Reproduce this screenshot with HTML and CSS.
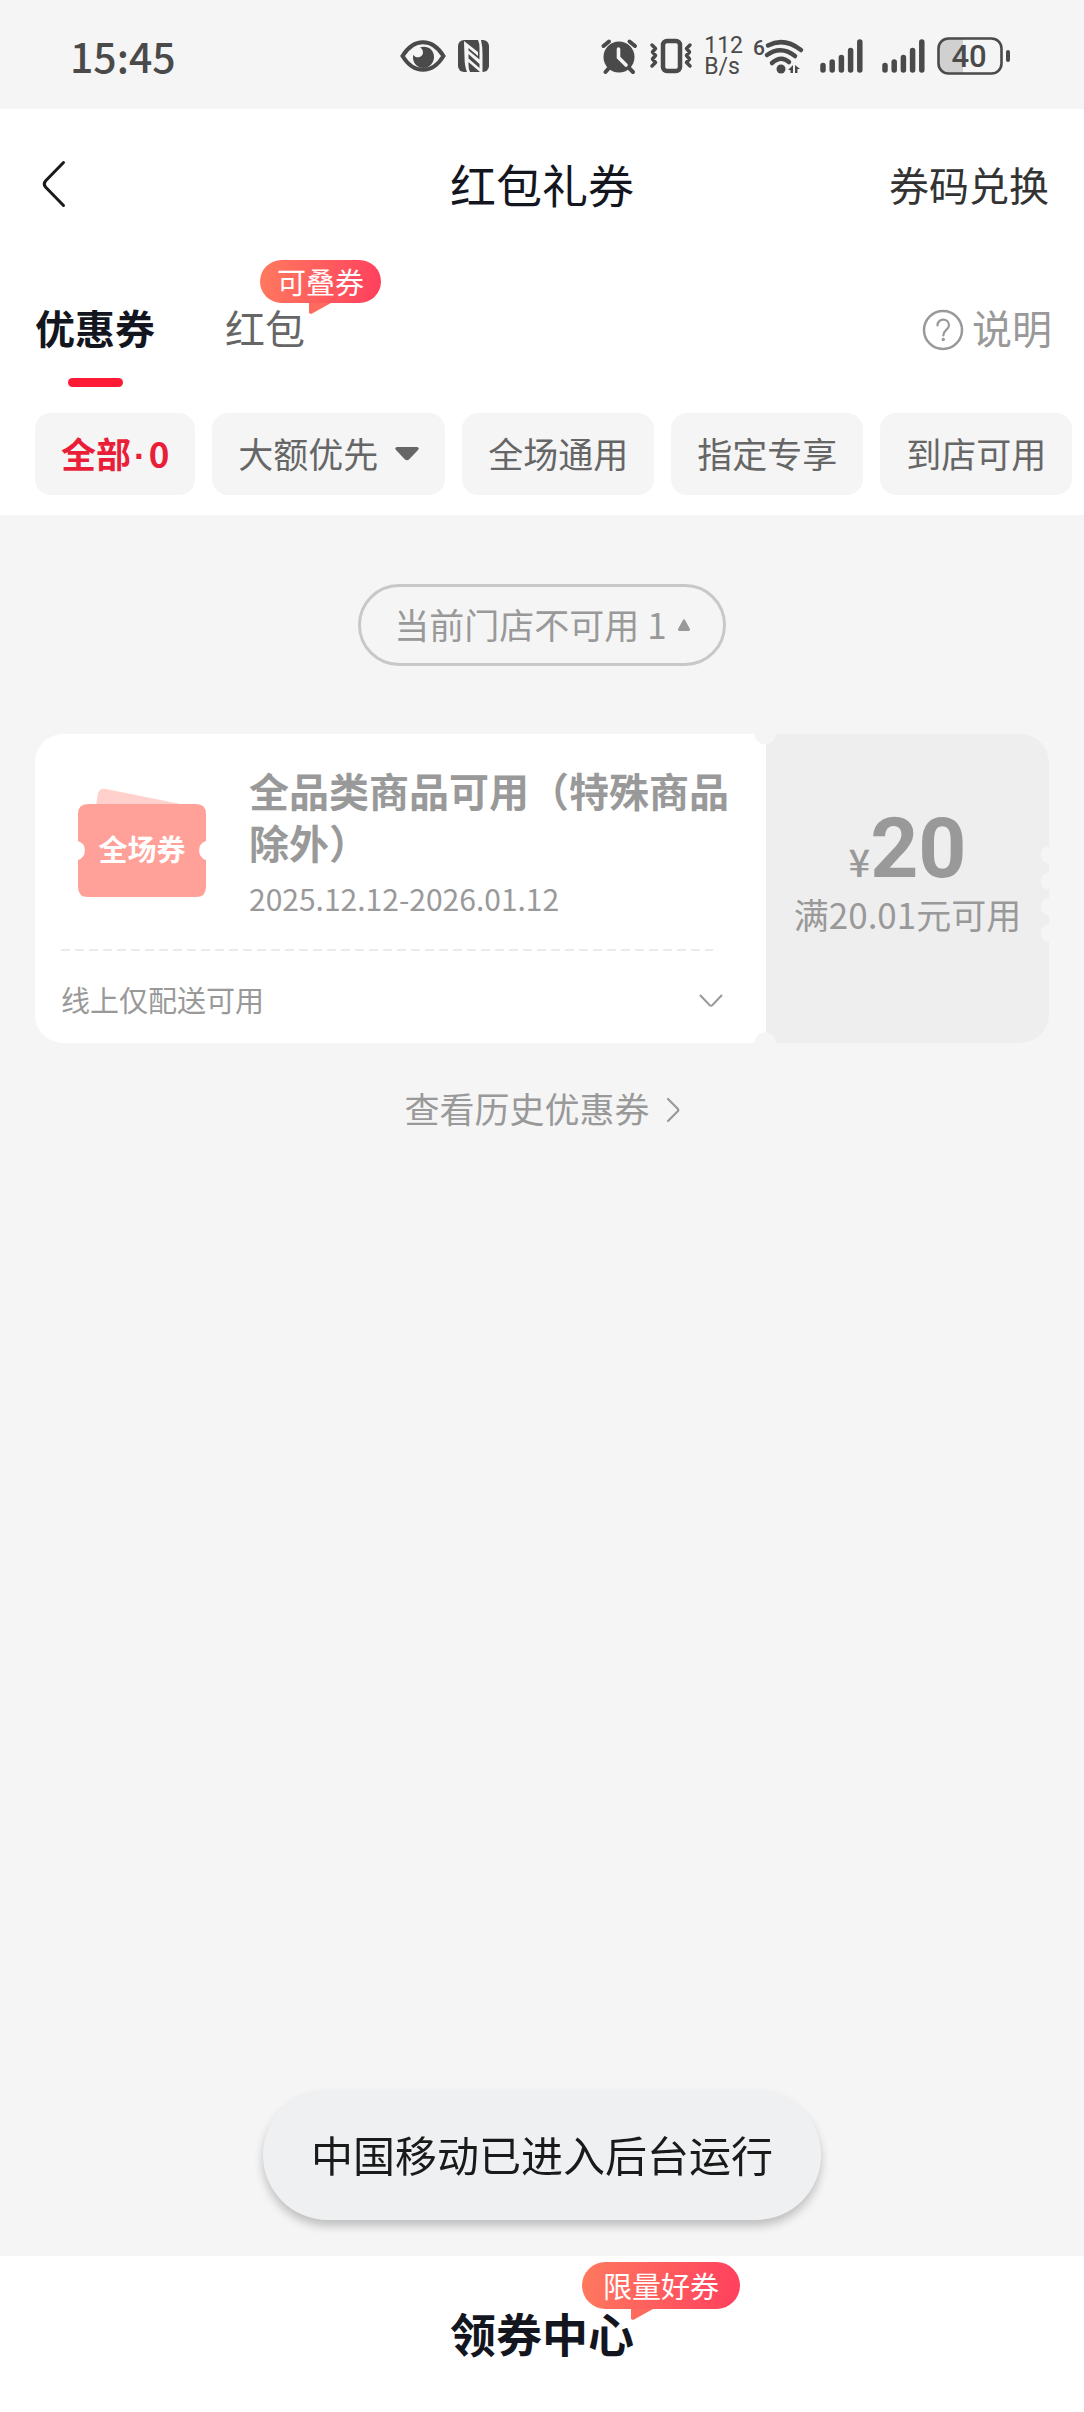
FILE: index.html
```html
<!DOCTYPE html>
<html lang="zh-CN">
<head>
<meta charset="utf-8">
<meta name="viewport" content="width=device-width, initial-scale=1">
<title>红包礼券</title>
<link rel="stylesheet" href="styles.css">
</head>
<body>
<div class="status">
  <span class="status-time">15:45</span>
  <div class="status-left">
    <svg width="46" height="32" viewBox="0 0 46 32" aria-hidden="true">
      <path d="M2.500 16C8 7 15 2.200 23 2.200S38 7 43.500 16C38 25 31 29.800 23 29.800S8 25 2.500 16Z" fill="none" stroke="currentColor" stroke-width="4"/>
      <path d="M20 7.500c7-2.500 14 2 14 9.500 0 6-4.800 11-10.500 11S13 23.500 13 17.500c0-1 .1-2 .4-2.800 2.600 4.600 9.600 2.600 9.600-2.200 0-2.300-1.200-4.100-3-5Z" fill="currentColor"/>
    </svg>
    <svg width="31" height="32" viewBox="0 0 31 32" aria-hidden="true">
      <rect width="31" height="32" rx="6" fill="currentColor"/>
      <path d="M6 1 20 12V16L10.500 8V25Q10.500 29 12 32H9Q6.500 26 6.500 17ZM20 0H23Q24.500 6 24.500 14V32H22L10.500 22V18.500L21.500 28V24L10.500 14V10.500L21.500 19.500V8Q21.500 3 20 0Z" fill="#f5f5f5"/>
    </svg>
  </div>
  <div class="status-right">
    <svg width="37" height="36" viewBox="0 0 37 36" aria-hidden="true">
      <circle cx="18" cy="19" r="15.500" fill="currentColor"/>
      <path d="M2.500 8 8 3.500M28.500 3.500 34 8M8 30 4.500 34M28 30 32 34" stroke="currentColor" stroke-width="4" stroke-linecap="round"/>
      <path d="M17.500 11V19.500L25 27" fill="none" stroke="#f5f5f5" stroke-width="3.600" stroke-linecap="round"/>
    </svg>
    <svg width="42" height="36" viewBox="0 0 42 36" aria-hidden="true">
      <rect x="13" y="3" width="17" height="30" rx="4" fill="none" stroke="currentColor" stroke-width="4.500"/>
      <path d="M2 7 5.500 10.500 2.500 14 5.500 17.500 2.500 21 5.500 24.500 2 28M40 7 36.500 10.500 39.500 14 36.500 17.500 39.500 21 36.500 24.500 40 28" fill="none" stroke="currentColor" stroke-width="3.500" stroke-linecap="round" stroke-linejoin="round"/>
    </svg>
    <span class="status-speed">112<br>B/s</span>
    <svg width="53" height="38" viewBox="0 0 53 38" aria-hidden="true">
      <text x="-2" y="18" class="wifi-gen">6</text>
      <path d="M13 8.500Q29 0 46 13M12 18Q26 8 40 19M17 26Q26 18 34 25" fill="none" stroke="currentColor" stroke-width="4.500" stroke-linecap="round"/>
      <circle cx="26" cy="32" r="4.500" fill="currentColor"/>
      <path d="M38 28V36H35.500V33H33ZM40 28 45 32H42.500V36H40Z" fill="currentColor"/>
    </svg>
    <svg width="50" height="34" viewBox="0 0 50 34" aria-hidden="true">
      <path d="M3 26.500V31M12.200 23V31M21.400 18.500V31M30.600 11.500V31M39.800 3V31" stroke="currentColor" stroke-width="5.500" stroke-linecap="round"/>
    </svg>
    <svg width="43" height="34" viewBox="0 0 43 34" aria-hidden="true">
      <path d="M3 26.500V31M12.200 23V31M21.400 18.500V31M30.600 11.500V31M39.800 3V31" stroke="currentColor" stroke-width="5.500" stroke-linecap="round"/>
    </svg>
    <svg width="73" height="38" viewBox="0 0 73 38" aria-label="电量 40%">
      <path d="M26 2H12Q2 2 2 12V26Q2 36 12 36H26Z" fill="#d0d0d0"/>
      <rect x="1.500" y="1.500" width="63" height="35" rx="10" fill="none" stroke="currentColor" stroke-width="2.600"/>
      <rect x="69" y="13" width="4" height="12" rx="2" fill="currentColor"/>
      <text x="32" y="30" text-anchor="middle" class="battery-text">40</text>
    </svg>
  </div>
</div>

<header class="header">
  <nav class="nav">
    <button class="nav-back" type="button" aria-label="返回">
      <svg width="24" height="48" viewBox="0 0 24 48"><path d="M21.500 2.500 3.500 21Q1 24 3.500 27L21.500 45.500" fill="none" stroke="#1a1a1a" stroke-width="3" stroke-linecap="round"/></svg>
    </button>
    <h1 class="nav-title">红包礼券</h1>
    <a class="nav-link" href="#redeem">券码兑换</a>
  </nav>

  <div class="tabs">
    <button class="tab tab-active" type="button">优惠券</button>
    <button class="tab" type="button">红包<span class="bubble bubble-tab">可叠券</span></button>
    <a class="help" href="#help">
      <svg class="help-icon" width="42" height="42" viewBox="0 0 42 42" aria-hidden="true">
        <circle cx="21" cy="21" r="19" fill="none" stroke="currentColor" stroke-width="2.500"/>
        <path d="M15.500 16.500C15.500 8.500 27 9 27 16.200 27 20.500 21.300 21 21.300 26.500" fill="none" stroke="currentColor" stroke-width="2.200" stroke-linecap="round"/>
        <circle cx="21.300" cy="30.500" r="1.700" fill="currentColor"/>
      </svg>说明</a>
  </div>

  <div class="chips">
    <button class="chip chip-active" type="button"><span>全部<span class="chip-dot">·</span>0</span></button>
    <label class="chip">
      <select class="chip-select" aria-label="排序方式"><option>大额优先</option></select>
      <svg class="caret" width="24" height="14" viewBox="0 0 24 14" aria-hidden="true"><path d="M2 0H22Q25 1 23 3L14 12.500Q12 14 10 12.500L1 3Q-1 1 2 0Z" fill="currentColor"/></svg>
    </label>
    <button class="chip" type="button">全场通用</button>
    <button class="chip" type="button">指定专享</button>
    <button class="chip" type="button">到店可用</button>
  </div>
</header>

<main class="main">
  <button class="fold" type="button">当前门店不可用 1
    <svg class="caret" width="12" height="12" viewBox="0 0 12 12" aria-hidden="true"><path d="M5 1Q6-.5 7 1L12 10Q12 12 11 12H1Q0 12 0 10Z" fill="currentColor"/></svg>
  </button>

  <article class="coupon">
    <div class="coupon-info">
      <div class="coupon-top">
        <svg class="coupon-icon" width="130" height="110" viewBox="0 0 130 110" role="img" aria-label="全场券">
          <path d="M18 18 20 5Q22 0 28 1L112 18Z" fill="#ffd0cc"/>
          <path d="M10 16H118Q128 16 128 26V53A10 10 0 0 0 128 72V99Q128 109 118 109H10Q0 109 0 99V72A10 10 0 0 0 0 53V26Q0 16 10 16Z" fill="#ffa198"/>
          <text x="64" y="73" text-anchor="middle" class="ticket-text">全场券</text>
        </svg>
        <div class="coupon-text">
          <h2 class="coupon-title">全品类商品可用（特殊商品除外）</h2>
          <p class="coupon-date">2025.12.12-2026.01.12</p>
        </div>
      </div>
      <svg class="coupon-line" height="2" aria-hidden="true"><line x1="0" y1="1" x2="100%" y2="1" stroke="#ebebeb" stroke-width="2" stroke-dasharray="9 5"/></svg>
      <button class="coupon-rule" type="button">线上仅配送可用
        <svg class="caret" width="24" height="14" viewBox="0 0 24 14" aria-hidden="true"><path d="M1.500 1.500 10.500 11Q12 12.500 13.500 11L22.500 1.500" fill="none" stroke="currentColor" stroke-width="2" stroke-linecap="round"/></svg>
      </button>
    </div>
    <div class="coupon-value">
      <p class="coupon-amount"><span class="coupon-unit">¥</span>20</p>
      <p class="coupon-cond">满20.01元可用</p>
    </div>
  </article>

  <a class="history" href="#history">查看历史优惠券
    <svg class="caret" width="14" height="26" viewBox="0 0 14 26" aria-hidden="true"><path d="M2 2 11.500 11.500Q13 13 11.500 14.500L2 24" fill="none" stroke="currentColor" stroke-width="2.200" stroke-linecap="round"/></svg>
  </a>
</main>

<div class="toast" role="status">中国移动已进入后台运行</div>

<footer class="footer">
  <a class="footer-link" href="#center">领券中心<span class="bubble bubble-footer">限量好券</span></a>
</footer>
</body>
</html>
```

FILE: styles.css
```css
* {
  box-sizing: border-box;
}

body {
  margin: 0;
  min-height: 100vh;
  display: flex;
  flex-direction: column;
  background: #f5f5f5;
  color: #666;
  font-family: "Noto Sans CJK SC", sans-serif;
}

button,
select {
  margin: 0;
  padding: 0;
  border: 0;
  background: none;
  color: inherit;
  font: inherit;
}

a {
  color: inherit;
  text-decoration: none;
}

h1,
h2,
p {
  margin: 0;
}

svg {
  display: block;
  flex: none;
  overflow: visible;
}

/* System status bar */
.status {
  display: flex;
  align-items: center;
  height: 109px;
  padding: 2px 74px 0 70px;
  color: #4a4a4a;
}

.status-time {
  padding-bottom: 2px;
  font-size: 41px;
  font-weight: 500;
  line-height: 60px;
}

.status-left {
  display: flex;
  gap: 12px;
  margin-left: 224px;
}

.status-right {
  display: flex;
  align-items: center;
  gap: 12px;
  margin-left: auto;
}

.status-speed {
  font-family: Roboto, sans-serif;
  font-size: 23px;
  line-height: 21px;
}

.wifi-gen {
  font-family: Roboto, sans-serif;
  font-size: 21px;
  font-weight: 500;
  fill: currentColor;
}

.battery-text {
  font-family: Roboto, sans-serif;
  font-size: 31px;
  font-weight: 500;
  fill: currentColor;
}

/* Page header */
.header {
  background: #fff;
  padding-bottom: 20px;
}

.nav {
  display: grid;
  grid-template-columns: 1fr auto 1fr;
  align-items: center;
  height: 150px;
  padding: 0 35px;
}

.nav-back {
  justify-self: start;
  padding-left: 7px;
}

.nav-title {
  padding-bottom: 2px;
  color: #14161f;
  font-size: 46px;
  font-weight: 400;
  line-height: 60px;
}

.nav-link {
  justify-self: end;
  color: #333;
  font-size: 40px;
  line-height: 60px;
}

.tabs {
  display: flex;
  align-items: flex-start;
  gap: 70px;
  padding: 38px 32px 0 35px;
}

.tab {
  position: relative;
  font-size: 40px;
  line-height: 60px;
}

.tab-active {
  color: #14161f;
  font-weight: 700;
}

.tab-active::after {
  content: "";
  display: block;
  width: 55px;
  height: 9px;
  margin: 21px auto 0;
  border-radius: 5px;
  background: #fe1a35;
}

.help {
  display: flex;
  align-items: center;
  gap: 8px;
  margin-left: auto;
  color: #999;
  font-size: 40px;
  line-height: 60px;
}

.help-icon {
  margin-top: 6px;
}

.bubble {
  position: absolute;
  padding: 0 17px;
  border-radius: 24px;
  background: linear-gradient(100deg, #ff7a5e, #ff3f5e);
  color: #fff;
  font-size: 29px;
  font-weight: 400;
  white-space: nowrap;
}

.bubble::after {
  content: "";
  position: absolute;
  top: 100%;
  left: 49px;
  width: 22px;
  height: 11px;
  background: #ff6a5e;
  clip-path: polygon(0 0, 100% 0, 10% 100%, 0 90%);
}

.bubble-tab {
  left: 35px;
  bottom: 54px;
  line-height: 43px;
}

.chips {
  display: flex;
  gap: 17px;
  padding: 26px 12px 0 35px;
  overflow: hidden;
}

.chip {
  display: flex;
  flex: none;
  align-items: center;
  gap: 16px;
  height: 82px;
  padding: 0 26px 4px;
  border-radius: 16px;
  background: #f5f5f5;
  font-size: 35px;
}

.chip-active {
  color: #e91f3a;
  font-weight: 700;
}

.chip-dot {
  margin: 0 3px;
  font-family: "Liberation Sans", sans-serif;
}

.chip-select {
  appearance: none;
}

.caret {
  margin-top: 3px;
}

/* Coupon list */
.main {
  flex: 1;
  display: flex;
  flex-direction: column;
  align-items: center;
  padding: 69px 35px 0;
  color: #999;
}

.fold {
  display: flex;
  align-items: center;
  gap: 11px;
  height: 82px;
  padding: 0 33px 4px;
  border: 3px solid #c8c8c8;
  border-radius: 41px;
  font-size: 35px;
}

.coupon {
  position: relative;
  display: flex;
  align-self: stretch;
  margin-top: 68px;
  border-radius: 28px;
  overflow: hidden;
  background: #fff;
}

/* Round notches where the two halves meet */
.coupon-value::before {
  content: "";
  position: absolute;
  top: 0;
  bottom: 0;
  left: -12px;
  width: 22px;
  background:
    radial-gradient(circle at 50% 0, #f5f5f5 10px, transparent 11px),
    radial-gradient(circle at 50% 100%, #f5f5f5 10px, transparent 11px);
}

/* Perforation on the outer edge */
.coupon-value::after {
  content: "";
  position: absolute;
  top: 108px;
  right: 0;
  width: 9px;
  height: 104px;
  background: radial-gradient(circle at 100% 50%, #f5f5f5 8px, transparent 9px) 0 0 / 9px 26px;
}

.coupon-info {
  flex: 1;
  padding: 30px 37px 14px 26px;
}

.coupon-top {
  display: flex;
  gap: 41px;
  padding-left: 17px;
}

.coupon-icon {
  margin-top: 24px;
}

.ticket-text {
  font-size: 29px;
  font-weight: 700;
  fill: #fff;
}

.coupon-title {
  font-size: 40px;
  font-weight: 700;
  line-height: 52px;
}

.coupon-date {
  font-size: 30px;
  line-height: 60px;
}

.coupon-line {
  width: calc(100% - 16px);
  margin-top: 21px;
}

.coupon-rule {
  display: flex;
  align-items: center;
  justify-content: space-between;
  width: 100%;
  height: 78px;
  padding: 18px 6px 0 0;
  font-size: 29px;
}

.coupon-value {
  position: relative;
  width: 283px;
  padding-top: 73px;
  background: #eee;
  text-align: center;
}

.coupon-amount {
  font-family: Roboto, sans-serif;
  font-size: 84px;
  font-weight: 700;
  line-height: 84px;
}

.coupon-unit {
  font-family: "Noto Sans CJK SC", sans-serif;
  font-size: 38px;
  font-weight: 500;
  line-height: 1;
}

.coupon-cond {
  font-size: 35px;
  line-height: 46px;
}

.history {
  display: flex;
  align-items: center;
  gap: 16px;
  margin-top: 39px;
  font-size: 35px;
  line-height: 52px;
}

/* Floating message above the footer */
.toast {
  position: fixed;
  left: 50%;
  bottom: 192px;
  transform: translateX(-50%);
  padding: 0 48px 2px;
  border-radius: 65px;
  background: #eff0f2;
  box-shadow: 0 6px 10px rgba(0, 0, 0, 0.22);
  color: #1a1a1a;
  font-size: 42px;
  line-height: 128px;
  white-space: nowrap;
}

.footer {
  display: flex;
  align-items: flex-start;
  justify-content: center;
  height: 156px;
  padding-top: 46px;
  background: #fff;
}

.footer-link {
  position: relative;
  color: #14161f;
  font-size: 46px;
  font-weight: 700;
  line-height: 60px;
}

.bubble-footer {
  left: 132px;
  bottom: 53px;
  padding: 0 21px;
  line-height: 47px;
}
```
